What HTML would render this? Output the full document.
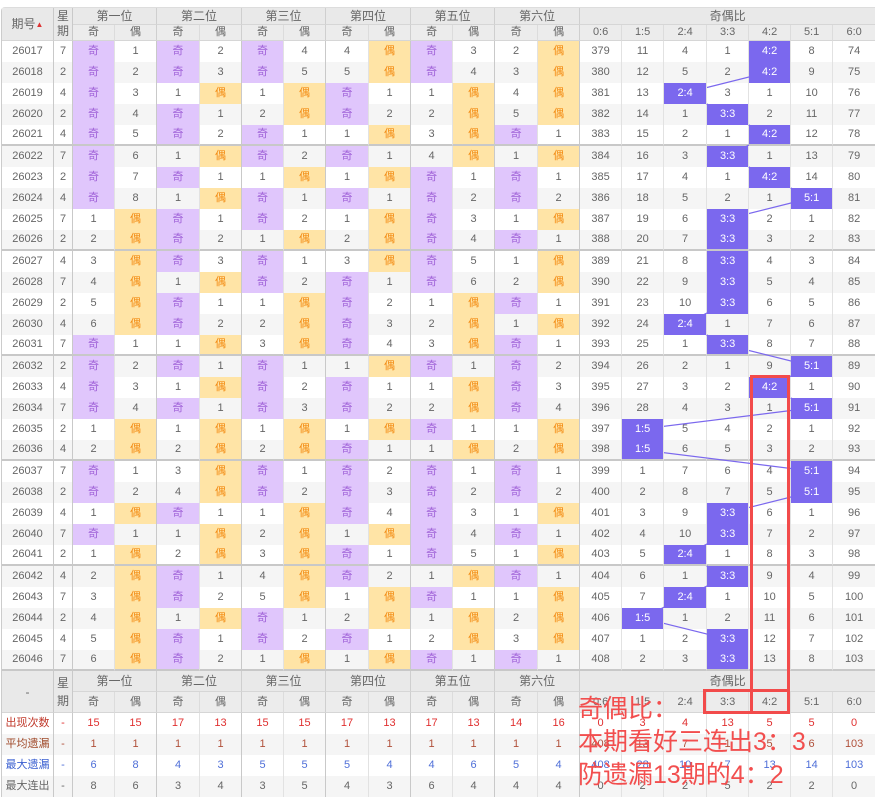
<!DOCTYPE html>
<html><head><meta charset="utf-8">
<style>
*{margin:0;padding:0;box-sizing:border-box}
body{width:875px;height:799px;background:#fff;position:relative;overflow:hidden;font-family:"Liberation Sans","Noto Sans CJK SC",sans-serif}
table{position:absolute;left:1px;top:7px;width:874px;border-collapse:separate;border-spacing:0;table-layout:fixed;border-top:1px solid #ddd;border-left:1px solid #ccc;border-radius:4px 0 0 0}
td{height:21px;padding:0;text-align:center;font-size:11px;line-height:13px;color:#666;border-right:1px solid #e2e2e2;white-space:nowrap;overflow:hidden}
tr.d:nth-child(even) td{background:#f5f5f5}
tr.d td{background:#fff}
tr.d td:nth-child(2n):not(:nth-child(n+15)){border-right:1px solid #c9c9c9}
tr.d td:first-child{border-right:1px solid #c9c9c9}
tr.g td{border-bottom:2px solid #c8c8c8}
tr.d td.j{background:#e0c6fc;color:#a062d8}
tr.d td.o{background:#ffe4a6;color:#f38b12}
tr.d td.h{background:#7b68ee;color:#fff;position:relative;z-index:2}
.hd td{background:#e9e9e9;color:#666;font-size:12px;line-height:14px;border-bottom:1px solid #d6d6d6;border-right:1px solid #cfcfcf;height:17px}
.hd2 td{background:#ececec;font-size:11px;line-height:13px;border-right:1px solid #dcdcdc;height:16px}
.ft td{height:21px}
.s td{font-size:11px}
.s td:first-child{border-right:1px solid #c9c9c9}
.r td{color:#e03030}.r td:first-child{color:#c0392b}
.a td{color:#b0503a}.a td:first-child{color:#a04a2a}
.b td{color:#4f6fd8}.b td:first-child{color:#3a5fd0}
.c td{color:#666}
.s td:nth-child(2n):not(:nth-child(n+15)){border-right:1px solid #c9c9c9}
svg{position:absolute;left:0;top:0;z-index:1}
.note{position:absolute;left:578px;top:693px;color:#f24e4e;font-size:25px;line-height:33px;z-index:5;font-family:"Liberation Sans","Noto Sans CJK SC",sans-serif}
.box{position:absolute;border:3px solid #f24b4b;z-index:4}
.arw{font-size:8px;line-height:8px;color:#d33;vertical-align:middle}
.wk{line-height:15px !important}
</style></head><body>
<table>
<colgroup><col style="width:52px"><col style="width:19px">
<col style="width:42px"><col style="width:42px"><col style="width:43px"><col style="width:42px"><col style="width:42px"><col style="width:42px"><col style="width:43px"><col style="width:42px"><col style="width:42px"><col style="width:42px"><col style="width:43px"><col style="width:42px">
<col style="width:42px"><col style="width:42px"><col style="width:43px"><col style="width:42px"><col style="width:42px"><col style="width:42px"><col style="width:43px"></colgroup>
<tr class="hd"><td rowspan="2" style="height:33px;border-right:1px solid #c9c9c9">期号<span class="arw">▲</span></td><td rowspan="2" class="wk" style="height:33px;border-right:1px solid #c9c9c9">星<br>期</td><td colspan="2">第一位</td><td colspan="2">第二位</td><td colspan="2">第三位</td><td colspan="2">第四位</td><td colspan="2">第五位</td><td colspan="2">第六位</td><td colspan="7">奇偶比</td></tr>
<tr class="hd hd2"><td>奇</td><td style="border-right:1px solid #cfcfcf">偶</td><td>奇</td><td style="border-right:1px solid #cfcfcf">偶</td><td>奇</td><td style="border-right:1px solid #cfcfcf">偶</td><td>奇</td><td style="border-right:1px solid #cfcfcf">偶</td><td>奇</td><td style="border-right:1px solid #cfcfcf">偶</td><td>奇</td><td style="border-right:1px solid #cfcfcf">偶</td><td>0:6</td><td>1:5</td><td>2:4</td><td>3:3</td><td>4:2</td><td>5:1</td><td>6:0</td></tr>

<tr class="d"><td>26017</td><td>7</td><td class="j">奇</td><td>1</td><td class="j">奇</td><td>2</td><td class="j">奇</td><td>4</td><td>4</td><td class="o">偶</td><td class="j">奇</td><td>3</td><td>2</td><td class="o">偶</td><td>379</td><td>11</td><td>4</td><td>1</td><td class="h">4:2</td><td>8</td><td>74</td></tr>
<tr class="d"><td>26018</td><td>2</td><td class="j">奇</td><td>2</td><td class="j">奇</td><td>3</td><td class="j">奇</td><td>5</td><td>5</td><td class="o">偶</td><td class="j">奇</td><td>4</td><td>3</td><td class="o">偶</td><td>380</td><td>12</td><td>5</td><td>2</td><td class="h">4:2</td><td>9</td><td>75</td></tr>
<tr class="d"><td>26019</td><td>4</td><td class="j">奇</td><td>3</td><td>1</td><td class="o">偶</td><td>1</td><td class="o">偶</td><td class="j">奇</td><td>1</td><td>1</td><td class="o">偶</td><td>4</td><td class="o">偶</td><td>381</td><td>13</td><td class="h">2:4</td><td>3</td><td>1</td><td>10</td><td>76</td></tr>
<tr class="d"><td>26020</td><td>2</td><td class="j">奇</td><td>4</td><td class="j">奇</td><td>1</td><td>2</td><td class="o">偶</td><td class="j">奇</td><td>2</td><td>2</td><td class="o">偶</td><td>5</td><td class="o">偶</td><td>382</td><td>14</td><td>1</td><td class="h">3:3</td><td>2</td><td>11</td><td>77</td></tr>
<tr class="d g"><td>26021</td><td>4</td><td class="j">奇</td><td>5</td><td class="j">奇</td><td>2</td><td class="j">奇</td><td>1</td><td>1</td><td class="o">偶</td><td>3</td><td class="o">偶</td><td class="j">奇</td><td>1</td><td>383</td><td>15</td><td>2</td><td>1</td><td class="h">4:2</td><td>12</td><td>78</td></tr>
<tr class="d"><td>26022</td><td>7</td><td class="j">奇</td><td>6</td><td>1</td><td class="o">偶</td><td class="j">奇</td><td>2</td><td class="j">奇</td><td>1</td><td>4</td><td class="o">偶</td><td>1</td><td class="o">偶</td><td>384</td><td>16</td><td>3</td><td class="h">3:3</td><td>1</td><td>13</td><td>79</td></tr>
<tr class="d"><td>26023</td><td>2</td><td class="j">奇</td><td>7</td><td class="j">奇</td><td>1</td><td>1</td><td class="o">偶</td><td>1</td><td class="o">偶</td><td class="j">奇</td><td>1</td><td class="j">奇</td><td>1</td><td>385</td><td>17</td><td>4</td><td>1</td><td class="h">4:2</td><td>14</td><td>80</td></tr>
<tr class="d"><td>26024</td><td>4</td><td class="j">奇</td><td>8</td><td>1</td><td class="o">偶</td><td class="j">奇</td><td>1</td><td class="j">奇</td><td>1</td><td class="j">奇</td><td>2</td><td class="j">奇</td><td>2</td><td>386</td><td>18</td><td>5</td><td>2</td><td>1</td><td class="h">5:1</td><td>81</td></tr>
<tr class="d"><td>26025</td><td>7</td><td>1</td><td class="o">偶</td><td class="j">奇</td><td>1</td><td class="j">奇</td><td>2</td><td>1</td><td class="o">偶</td><td class="j">奇</td><td>3</td><td>1</td><td class="o">偶</td><td>387</td><td>19</td><td>6</td><td class="h">3:3</td><td>2</td><td>1</td><td>82</td></tr>
<tr class="d g"><td>26026</td><td>2</td><td>2</td><td class="o">偶</td><td class="j">奇</td><td>2</td><td>1</td><td class="o">偶</td><td>2</td><td class="o">偶</td><td class="j">奇</td><td>4</td><td class="j">奇</td><td>1</td><td>388</td><td>20</td><td>7</td><td class="h">3:3</td><td>3</td><td>2</td><td>83</td></tr>
<tr class="d"><td>26027</td><td>4</td><td>3</td><td class="o">偶</td><td class="j">奇</td><td>3</td><td class="j">奇</td><td>1</td><td>3</td><td class="o">偶</td><td class="j">奇</td><td>5</td><td>1</td><td class="o">偶</td><td>389</td><td>21</td><td>8</td><td class="h">3:3</td><td>4</td><td>3</td><td>84</td></tr>
<tr class="d"><td>26028</td><td>7</td><td>4</td><td class="o">偶</td><td>1</td><td class="o">偶</td><td class="j">奇</td><td>2</td><td class="j">奇</td><td>1</td><td class="j">奇</td><td>6</td><td>2</td><td class="o">偶</td><td>390</td><td>22</td><td>9</td><td class="h">3:3</td><td>5</td><td>4</td><td>85</td></tr>
<tr class="d"><td>26029</td><td>2</td><td>5</td><td class="o">偶</td><td class="j">奇</td><td>1</td><td>1</td><td class="o">偶</td><td class="j">奇</td><td>2</td><td>1</td><td class="o">偶</td><td class="j">奇</td><td>1</td><td>391</td><td>23</td><td>10</td><td class="h">3:3</td><td>6</td><td>5</td><td>86</td></tr>
<tr class="d"><td>26030</td><td>4</td><td>6</td><td class="o">偶</td><td class="j">奇</td><td>2</td><td>2</td><td class="o">偶</td><td class="j">奇</td><td>3</td><td>2</td><td class="o">偶</td><td>1</td><td class="o">偶</td><td>392</td><td>24</td><td class="h">2:4</td><td>1</td><td>7</td><td>6</td><td>87</td></tr>
<tr class="d g"><td>26031</td><td>7</td><td class="j">奇</td><td>1</td><td>1</td><td class="o">偶</td><td>3</td><td class="o">偶</td><td class="j">奇</td><td>4</td><td>3</td><td class="o">偶</td><td class="j">奇</td><td>1</td><td>393</td><td>25</td><td>1</td><td class="h">3:3</td><td>8</td><td>7</td><td>88</td></tr>
<tr class="d"><td>26032</td><td>2</td><td class="j">奇</td><td>2</td><td class="j">奇</td><td>1</td><td class="j">奇</td><td>1</td><td>1</td><td class="o">偶</td><td class="j">奇</td><td>1</td><td class="j">奇</td><td>2</td><td>394</td><td>26</td><td>2</td><td>1</td><td>9</td><td class="h">5:1</td><td>89</td></tr>
<tr class="d"><td>26033</td><td>4</td><td class="j">奇</td><td>3</td><td>1</td><td class="o">偶</td><td class="j">奇</td><td>2</td><td class="j">奇</td><td>1</td><td>1</td><td class="o">偶</td><td class="j">奇</td><td>3</td><td>395</td><td>27</td><td>3</td><td>2</td><td class="h">4:2</td><td>1</td><td>90</td></tr>
<tr class="d"><td>26034</td><td>7</td><td class="j">奇</td><td>4</td><td class="j">奇</td><td>1</td><td class="j">奇</td><td>3</td><td class="j">奇</td><td>2</td><td>2</td><td class="o">偶</td><td class="j">奇</td><td>4</td><td>396</td><td>28</td><td>4</td><td>3</td><td>1</td><td class="h">5:1</td><td>91</td></tr>
<tr class="d"><td>26035</td><td>2</td><td>1</td><td class="o">偶</td><td>1</td><td class="o">偶</td><td>1</td><td class="o">偶</td><td>1</td><td class="o">偶</td><td class="j">奇</td><td>1</td><td>1</td><td class="o">偶</td><td>397</td><td class="h">1:5</td><td>5</td><td>4</td><td>2</td><td>1</td><td>92</td></tr>
<tr class="d g"><td>26036</td><td>4</td><td>2</td><td class="o">偶</td><td>2</td><td class="o">偶</td><td>2</td><td class="o">偶</td><td class="j">奇</td><td>1</td><td>1</td><td class="o">偶</td><td>2</td><td class="o">偶</td><td>398</td><td class="h">1:5</td><td>6</td><td>5</td><td>3</td><td>2</td><td>93</td></tr>
<tr class="d"><td>26037</td><td>7</td><td class="j">奇</td><td>1</td><td>3</td><td class="o">偶</td><td class="j">奇</td><td>1</td><td class="j">奇</td><td>2</td><td class="j">奇</td><td>1</td><td class="j">奇</td><td>1</td><td>399</td><td>1</td><td>7</td><td>6</td><td>4</td><td class="h">5:1</td><td>94</td></tr>
<tr class="d"><td>26038</td><td>2</td><td class="j">奇</td><td>2</td><td>4</td><td class="o">偶</td><td class="j">奇</td><td>2</td><td class="j">奇</td><td>3</td><td class="j">奇</td><td>2</td><td class="j">奇</td><td>2</td><td>400</td><td>2</td><td>8</td><td>7</td><td>5</td><td class="h">5:1</td><td>95</td></tr>
<tr class="d"><td>26039</td><td>4</td><td>1</td><td class="o">偶</td><td class="j">奇</td><td>1</td><td>1</td><td class="o">偶</td><td class="j">奇</td><td>4</td><td class="j">奇</td><td>3</td><td>1</td><td class="o">偶</td><td>401</td><td>3</td><td>9</td><td class="h">3:3</td><td>6</td><td>1</td><td>96</td></tr>
<tr class="d"><td>26040</td><td>7</td><td class="j">奇</td><td>1</td><td>1</td><td class="o">偶</td><td>2</td><td class="o">偶</td><td>1</td><td class="o">偶</td><td class="j">奇</td><td>4</td><td class="j">奇</td><td>1</td><td>402</td><td>4</td><td>10</td><td class="h">3:3</td><td>7</td><td>2</td><td>97</td></tr>
<tr class="d g"><td>26041</td><td>2</td><td>1</td><td class="o">偶</td><td>2</td><td class="o">偶</td><td>3</td><td class="o">偶</td><td class="j">奇</td><td>1</td><td class="j">奇</td><td>5</td><td>1</td><td class="o">偶</td><td>403</td><td>5</td><td class="h">2:4</td><td>1</td><td>8</td><td>3</td><td>98</td></tr>
<tr class="d"><td>26042</td><td>4</td><td>2</td><td class="o">偶</td><td class="j">奇</td><td>1</td><td>4</td><td class="o">偶</td><td class="j">奇</td><td>2</td><td>1</td><td class="o">偶</td><td class="j">奇</td><td>1</td><td>404</td><td>6</td><td>1</td><td class="h">3:3</td><td>9</td><td>4</td><td>99</td></tr>
<tr class="d"><td>26043</td><td>7</td><td>3</td><td class="o">偶</td><td class="j">奇</td><td>2</td><td>5</td><td class="o">偶</td><td>1</td><td class="o">偶</td><td class="j">奇</td><td>1</td><td>1</td><td class="o">偶</td><td>405</td><td>7</td><td class="h">2:4</td><td>1</td><td>10</td><td>5</td><td>100</td></tr>
<tr class="d"><td>26044</td><td>2</td><td>4</td><td class="o">偶</td><td>1</td><td class="o">偶</td><td class="j">奇</td><td>1</td><td>2</td><td class="o">偶</td><td>1</td><td class="o">偶</td><td>2</td><td class="o">偶</td><td>406</td><td class="h">1:5</td><td>1</td><td>2</td><td>11</td><td>6</td><td>101</td></tr>
<tr class="d"><td>26045</td><td>4</td><td>5</td><td class="o">偶</td><td class="j">奇</td><td>1</td><td class="j">奇</td><td>2</td><td class="j">奇</td><td>1</td><td>2</td><td class="o">偶</td><td>3</td><td class="o">偶</td><td>407</td><td>1</td><td>2</td><td class="h">3:3</td><td>12</td><td>7</td><td>102</td></tr>
<tr class="d g"><td>26046</td><td>7</td><td>6</td><td class="o">偶</td><td class="j">奇</td><td>2</td><td>1</td><td class="o">偶</td><td>1</td><td class="o">偶</td><td class="j">奇</td><td>1</td><td class="j">奇</td><td>1</td><td>408</td><td>2</td><td>3</td><td class="h">3:3</td><td>13</td><td>8</td><td>103</td></tr>

<tr class="hd ft"><td rowspan="2" style="height:42px;border-right:1px solid #c9c9c9">-</td><td rowspan="2" class="wk" style="height:42px;line-height:18px !important;border-right:1px solid #c9c9c9">星<br>期</td><td colspan="2">第一位</td><td colspan="2">第二位</td><td colspan="2">第三位</td><td colspan="2">第四位</td><td colspan="2">第五位</td><td colspan="2">第六位</td><td colspan="7">奇偶比</td></tr>
<tr class="hd hd2 ft"><td>奇</td><td style="border-right:1px solid #cfcfcf">偶</td><td>奇</td><td style="border-right:1px solid #cfcfcf">偶</td><td>奇</td><td style="border-right:1px solid #cfcfcf">偶</td><td>奇</td><td style="border-right:1px solid #cfcfcf">偶</td><td>奇</td><td style="border-right:1px solid #cfcfcf">偶</td><td>奇</td><td style="border-right:1px solid #cfcfcf">偶</td><td>0:6</td><td>1:5</td><td>2:4</td><td>3:3</td><td>4:2</td><td>5:1</td><td>6:0</td></tr>
<tr class="s r"><td>出现次数</td><td>-</td><td>15</td><td>15</td><td>17</td><td>13</td><td>15</td><td>15</td><td>17</td><td>13</td><td>17</td><td>13</td><td>14</td><td>16</td><td>0</td><td>3</td><td>4</td><td>13</td><td>5</td><td>5</td><td>0</td></tr>
<tr class="s a" style="background:#f5f5f5"><td>平均遗漏</td><td>-</td><td>1</td><td>1</td><td>1</td><td>1</td><td>1</td><td>1</td><td>1</td><td>1</td><td>1</td><td>1</td><td>1</td><td>1</td><td>408</td><td>13</td><td>7</td><td>1</td><td>5</td><td>6</td><td>103</td></tr>
<tr class="s b"><td>最大遗漏</td><td>-</td><td>6</td><td>8</td><td>4</td><td>3</td><td>5</td><td>5</td><td>5</td><td>4</td><td>4</td><td>6</td><td>5</td><td>4</td><td>408</td><td>28</td><td>10</td><td>7</td><td>13</td><td>14</td><td>103</td></tr>
<tr class="s c" style="background:#f5f5f5"><td>最大连出</td><td>-</td><td>8</td><td>6</td><td>3</td><td>4</td><td>3</td><td>5</td><td>4</td><td>3</td><td>6</td><td>4</td><td>4</td><td>4</td><td>0</td><td>2</td><td>2</td><td>5</td><td>2</td><td>2</td><td>0</td></tr>
</table>

<svg width="875" height="799" viewBox="0 0 875 799">
<polyline fill="none" stroke="#7b68ee" stroke-width="1.2" points="769,51 769,72 685,93 727,114 769,135 727,156 769,177 811,198 727,219 727,240 727,261 727,282 727,303 685,324 727,345 811,366 769,387 811,408 642,429 642,450 811,471 811,492 727,513 727,534 685,555 727,576 685,597 642,618 727,639 727,660"/>
</svg>

<div class="box" style="left:750px;top:375px;width:40px;height:339px"></div>
<div class="box" style="left:703px;top:689px;width:87px;height:25px"></div>
<div class="note">奇偶比：<br>本期看好三连出3：3<br>防遗漏13期的4：2</div>
</body></html>
